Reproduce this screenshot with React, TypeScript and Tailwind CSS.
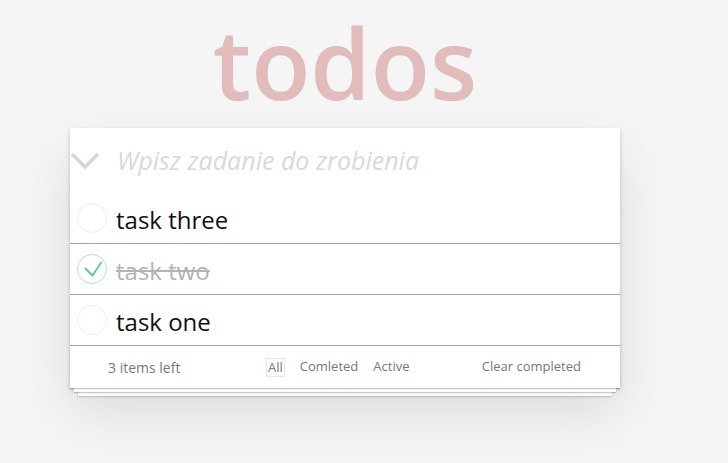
import React from "react";

interface Todo {
  title: string;
  done: boolean;
}

const TODOS: Todo[] = [
  { title: "task three", done: false },
  { title: "task two", done: true },
  { title: "task one", done: false },
];

const Toggle: React.FC<{ done: boolean }> = ({ done }) => (
  <svg width="30" height="30" viewBox="0 0 30 30" className="shrink-0">
    <circle cx="15" cy="15" r="14.5" fill="none" stroke={done ? "#bddad5" : "#ededed"} strokeWidth="1" />
    {done && (
      <polyline points="8,14 15.5,21.5 24.5,8" fill="none" stroke="#5dc2af" strokeWidth="1.8" />
    )}
  </svg>
);

export default function App() {
  return (
    <div className="min-h-[463px] w-full bg-[#f5f5f5] font-['Open_Sans',sans-serif]">
      <div className="ml-[70px] w-[550px] pt-[2px]">
        <h1 className="mb-[6px] text-center text-[97px] font-semibold leading-[120px] text-[#e2bbbb]">
          todos
        </h1>
        <div className="relative bg-white shadow-[0_2px_4px_0_rgba(0,0,0,0.2),0_25px_50px_0_rgba(0,0,0,0.1)]">
          <div className="flex h-[65px] items-center">
            <svg width="30" height="18" viewBox="0 0 30 18" className="mt-[1px] shrink-0">
              <polyline points="2,2 15,15 28,2" fill="none" stroke="#d6d6d6" strokeWidth="3.5" />
            </svg>
            <span className="ml-[17px] text-[25px] italic leading-[33px] text-[#d9d9d9]">
              Wpisz zadanie do zrobienia
            </span>
          </div>
          <ul>
            {TODOS.map((todo, i) => (
              <li key={i} className="flex h-[51px] items-center border-b border-[#a3a3a3] pl-[7px]">
                <Toggle done={todo.done} />
                <span
                  className={
                    todo.done
                      ? "ml-[9px] mt-[4px] text-[24px] leading-[30px] text-[#b3b3b3] line-through"
                      : "ml-[9px] mt-[4px] text-[24px] leading-[30px] text-[#111]"
                  }
                >
                  {todo.title}
                </span>
              </li>
            ))}
          </ul>
          <div className="relative flex h-[42px] items-center pl-[38px] pr-[39px] text-[13px] text-[#777] before:absolute before:inset-x-0 before:bottom-0 before:h-[42px] before:content-[''] before:shadow-[0_1px_1px_rgba(0,0,0,0.2),0_8px_0_-4px_#fafafa,0_9px_1px_-4px_rgba(0,0,0,0.2),0_16px_0_-8px_#fafafa,0_17px_2px_-8px_rgba(0,0,0,0.2)]">
            <span className="relative w-[158px] text-[14px]">3 items left</span>
            <div className="relative flex items-center gap-[15px]">
              <span className="border border-[rgba(175,47,47,0.15)] px-[1px] leading-[17px]">All</span>
              <span>Comleted</span>
              <span>Active</span>
            </div>
            <span className="relative ml-auto">Clear completed</span>
          </div>
        </div>
      </div>
    </div>
  );
}
